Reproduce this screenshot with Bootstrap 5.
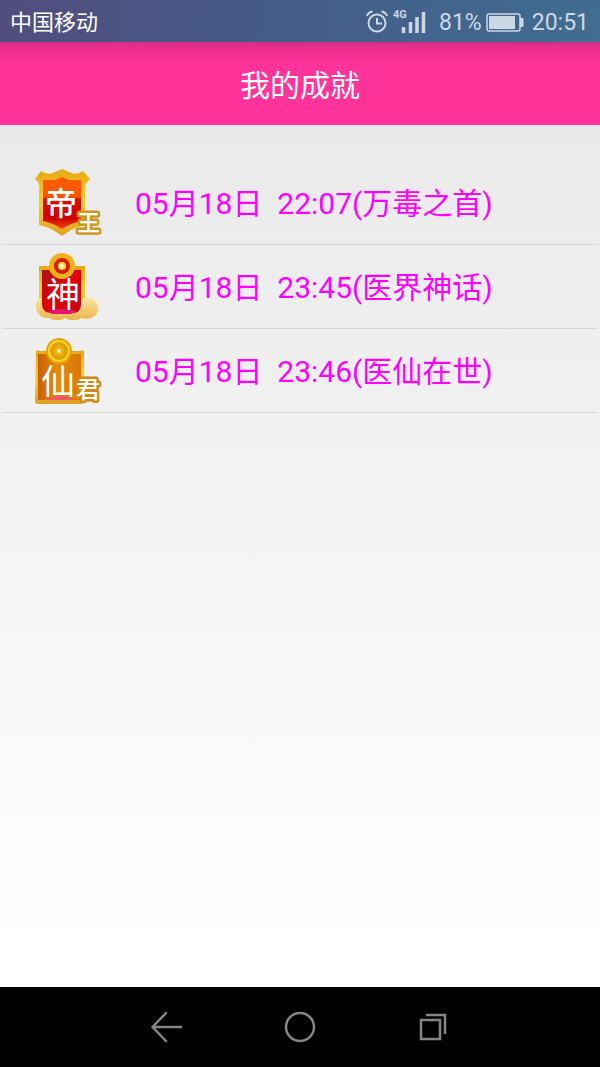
<!DOCTYPE html>
<html lang="zh-CN">
<head>
<meta charset="utf-8">
<meta name="viewport" content="width=device-width, initial-scale=1">
<title>我的成就</title>
<link href="https://cdn.jsdelivr.net/npm/bootstrap@5.3.0/dist/css/bootstrap.min.css" rel="stylesheet">
<style>
  body { font-family: Roboto, "Noto Sans CJK SC", sans-serif; background: #fff; }
  .status-bar { height: 42px; padding: 3px 11px 0 10px; background: linear-gradient(100deg, #524d7d, #435d89 50%, #416d91); color: #fff; font-size: 22px; line-height: 38px; }
  .status-info { color: #ccd8e3; font-size: 23px; }
  .title-bar { height: 83px; padding-top: 4px; background: linear-gradient(#d42d83, #f03091 8px, #ff3399 22px); color: #fff; }
  .title-bar h1 { font-size: 30px; line-height: 40px; }
  .page-main { background: linear-gradient(#eaeaea, #f1f1f1 35%, #fff 95%); padding: 36px 2px 0; }
  .achievement { height: 84px; padding: 0 0 0 31px; border-bottom: 1px solid #d8d8d8; gap: 32px; color: #f0f; font-size: 30px; line-height: 40px; white-space: pre; }
  .achievement span { padding-top: 3px; }
  .achievement svg text { font-family: "Noto Sans CJK SC", sans-serif; }
  .system-nav { height: 80px; padding: 0 100px; background: #000; color: #858585; }
  .system-nav .btn { color: inherit; }
</style>
</head>
<body class="d-flex flex-column min-vh-100">
<header>
  <div class="status-bar d-flex justify-content-between align-items-center">
    <span>中国移动</span>
    <div class="status-info d-flex align-items-center">
      <svg width="62" height="32" viewBox="0 0 62 32" fill="none" stroke="currentColor" stroke-width="2" aria-hidden="true">
        <circle cx="12" cy="16" r="8.500"/>
        <path d="M12 11v5.500h5M2 9q1.500-4 5.500-4.500M16.500 4.500q4 .5 5.500 4.500"/>
        <text x="28" y="11" fill="currentColor" stroke="none" font-size="11" font-weight="700">4G</text>
        <path stroke-width="3.500" d="M38.500 20v6M45.500 15v11M52 10v16M58.500 5v21"/>
      </svg>
      <span class="ms-2 ps-1">81%</span>
      <svg class="ms-1" width="38" height="20" viewBox="0 0 38 20" fill="none" stroke="currentColor" aria-hidden="true">
        <rect x="1" y="1" width="33" height="17" rx="2" stroke-width="1.500"/>
        <path fill="currentColor" stroke="none" d="M3 3h26v13H3zM34 5h2.500q1 0 1 1v7q0 1-1 1H34z"/>
      </svg>
      <span class="ms-2">20:51</span>
    </div>
  </div>
  <div class="title-bar d-flex align-items-center justify-content-center">
    <h1 class="m-0 fw-normal">我的成就</h1>
  </div>
</header>
<main class="page-main flex-grow-1">
  <ul class="list-unstyled m-0">
    <li class="achievement d-flex align-items-center"><svg width="70" height="70" viewBox="0 0 70 70" role="img" aria-label="帝王">
        <defs>
          <linearGradient id="gold" x2="0" y2="1"><stop stop-color="#e7a714"/><stop offset=".5" stop-color="#f9d02a"/><stop offset="1" stop-color="#dda125"/></linearGradient>
          <linearGradient id="crimson" x2="0" y2="1"><stop stop-color="#ff5b00"/><stop offset=".38" stop-color="#fa5500"/><stop offset=".43" stop-color="#d90d08"/><stop offset=".8" stop-color="#cf0005"/><stop offset="1" stop-color="#f24b10"/></linearGradient>
        </defs>
        <path fill="url(#gold)" d="M2 11 8 3q7 5 14 1l7-3 7 3q7 4 14-1l7 8q-6 5-5 12v34q-11 2-23 11Q17 59 6 57V23Q8 16 2 11z"/>
        <path fill="url(#crimson)" d="M10 12h12l7-3 7 3h12v41q-10 2-19 8-9-6-19-8z"/>
        <text x="12" y="47" font-size="32" font-weight="500" fill="#fff">帝</text>
        <text x="44" y="63" font-size="23" font-weight="500" fill="#fff" stroke="#cb981c" stroke-width="5" stroke-linejoin="round" paint-order="stroke">王</text>
      </svg><span>05月18日  22:07(万毒之首)</span></li>
    <li class="achievement d-flex align-items-center"><svg width="70" height="70" viewBox="0 0 70 70" role="img" aria-label="神">
        <defs>
          <linearGradient id="cloud" x2="0" y2="1"><stop stop-color="#ffe9a8"/><stop offset="1" stop-color="#eab344"/></linearGradient>
          <linearGradient id="red" x2="1" y2="1"><stop stop-color="#a91518"/><stop offset=".5" stop-color="#e00009"/><stop offset="1" stop-color="#bf0713"/></linearGradient>
        </defs>
        <path fill="url(#gold)" d="M6 14h46v45H6z"/>
        <path fill="url(#cloud)" d="M6 46c-7 7-2 21 10 20 5 3 12 3 16 0 6 3 12 3 16 0 11 3 19-4 17-12-2-9-15-12-18-4z"/>
        <path fill="url(#red)" d="M9 18h39v34q0 10-10 9H19q-10 0-10-9z"/>
        <path fill="#e91471" d="M15 59q14-4 28 0l-5 3H19z"/>
        <circle cx="29" cy="14" r="13" fill="#efb019"/>
        <circle cx="29" cy="14" r="6" fill="#ffdc41" stroke="#dc1b0e" stroke-width="4"/>
        <circle cx="29" cy="14" r="2" fill="#fff8dd"/>
        <text x="13" y="55" font-size="34" fill="#fff">神</text>
      </svg><span>05月18日  23:45(医界神话)</span></li>
    <li class="achievement d-flex align-items-center"><svg width="70" height="70" viewBox="0 0 70 70" role="img" aria-label="仙君">
        <defs>
          <linearGradient id="amber" x2="1"><stop stop-color="#c86109"/><stop offset=".45" stop-color="#e88b08"/><stop offset="1" stop-color="#d87509"/></linearGradient>
        </defs>
        <path fill="url(#gold)" d="M3 15q2-1 4 0h40q2-1 4 0v50q0 3-3 3H5q-3 0-3-3z"/>
        <path fill="url(#amber)" d="M5 18h43v46H5z"/>
        <path fill="#f15570" d="M13 64q14-8 28 0z"/>
        <circle cx="26" cy="15" r="13" fill="#e5a20c"/>
        <circle cx="26" cy="15" r="10" fill="#dda006" stroke="#ffd32b" stroke-width="2"/>
        <circle cx="26" cy="15" r="5" fill="#efb20c"/><circle cx="26" cy="15" r="2" fill="#fff1b0"/>
        <text x="8" y="58" font-size="34" fill="#fff">仙</text>
        <text x="43" y="62" font-size="24" font-weight="500" fill="#fff" stroke="#cf8b19" stroke-width="5" stroke-linejoin="round" paint-order="stroke">君</text>
      </svg><span>05月18日  23:46(医仙在世)</span></li>
  </ul>
</main>
<nav class="system-nav d-flex align-items-center" aria-label="系统导航">
  <button class="btn border-0 p-0 flex-fill" type="button" aria-label="返回"><svg width="32" height="32" viewBox="0 0 32 32" fill="none" stroke="currentColor" stroke-width="2.500" stroke-linecap="round" stroke-linejoin="round"><path d="M30 16H2M15 2 1.500 16 15 30"/></svg></button>
  <button class="btn border-0 p-0 flex-fill" type="button" aria-label="主页"><svg width="32" height="32" viewBox="0 0 32 32" fill="none" stroke="currentColor" stroke-width="2.500"><circle cx="16" cy="16" r="14"/></svg></button>
  <button class="btn border-0 p-0 flex-fill" type="button" aria-label="最近任务"><svg width="32" height="32" viewBox="0 0 32 32" fill="none" stroke="currentColor" stroke-width="2.500"><path d="M4 9h19v19H4zM9 4h19v19"/></svg></button>
</nav>
<script src="https://cdn.jsdelivr.net/npm/bootstrap@5.3.0/dist/js/bootstrap.bundle.min.js"></script>
</body>
</html>
